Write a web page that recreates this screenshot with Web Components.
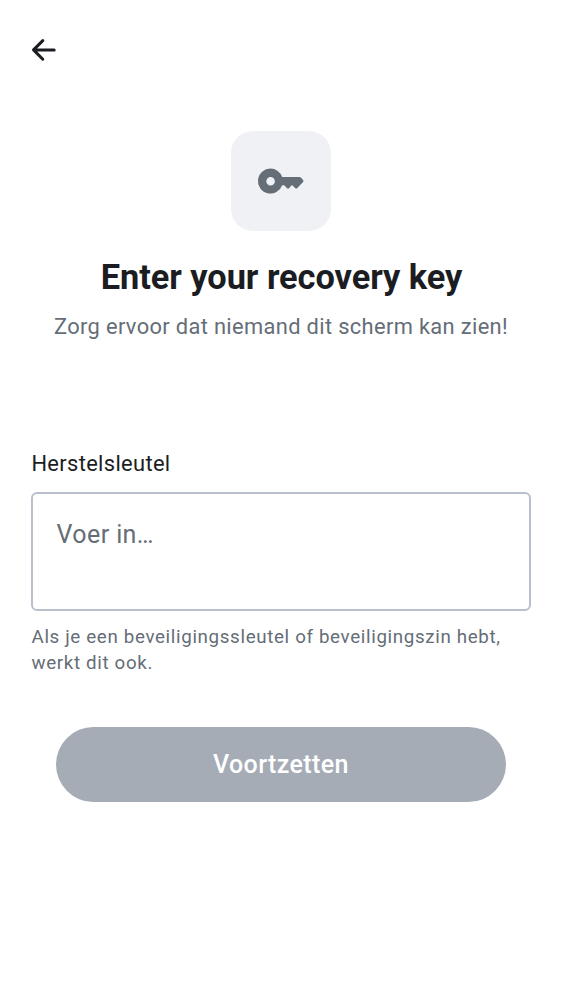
<!DOCTYPE html>
<html lang="nl"><head><meta charset="utf-8"><title>Recovery key</title>
<style>html,body{margin:0;height:100%;background:#fff}body{font-family:Roboto,sans-serif;color:#1b1d22}</style></head><body>
<recovery-screen></recovery-screen>
<script>
const define=(name,html)=>customElements.define(name,class extends HTMLElement{constructor(){super();this.attachShadow({mode:'open'}).innerHTML=html}});
define('back-button',`<style>:host{display:block;width:26px;height:24px}svg{display:block}</style>
<svg width="26" height="24" viewBox="0 0 26 24" fill="none" stroke="#1b1d22" stroke-width="3" stroke-linecap="round" stroke-linejoin="round"><path d="M11.8 2.6 2.5 11.9l9.3 9.3M3 11.9h20.2"/></svg>`);
define('key-tile',`<style>:host{display:flex;align-items:center;justify-content:center;width:100px;height:100px;border-radius:22px;background:#f0f1f5}svg{display:block}</style>
<svg width="50" height="50" viewBox="0 0 50 50" fill="#656d77"><path fill-rule="evenodd" d="M14.5 12.6a12.5 12.5 0 0 1 11.7 8.3h17.3q.8 0 1.4.6l2.2 2.6q.7 1 0 1.9l-6 6.2q-.9.8-1.8 0L36.6 29.6q-.6-.6-1.2 0L33 32.2q-1 .9-1.9 0l-2.9-2.9h-2A12.5 12.5 0 1 1 14.5 12.6M14.6 20.9a4.3 4.3 0 1 0 0 8.6 4.3 4.3 0 0 0 0-8.6"/></svg>`);
define('page-heading',`<style>:host{display:flex;flex-direction:column;align-items:center}h1{margin:25px 0 0;padding-left:1px;font-size:34.375px;line-height:42px;font-weight:700;letter-spacing:-.05px;white-space:nowrap}p{margin:16px 0 0;font-size:21.875px;line-height:26px;color:#656d77;letter-spacing:.345px;white-space:nowrap}</style>
<key-tile></key-tile><h1><slot name="title"></slot></h1><p><slot></slot></p>`);
define('key-field',`<style>:host{display:block}label{display:block;font-size:21.875px;line-height:28px;letter-spacing:.35px;padding-left:.4px}.box{box-sizing:border-box;height:119px;margin-top:14px;padding:26px 23.6px;border:2px solid #b9c0cc;border-radius:6px;color:#656d77;font-size:25px;line-height:30px;letter-spacing:.4px}.hint{margin-top:13px;padding-left:.5px;color:#656d77;font-size:18.75px;line-height:26px;letter-spacing:.65px}</style>
<label><slot name="label"></slot></label><div class="box"><slot name="placeholder"></slot></div><div class="hint"><slot></slot></div>`);
define('primary-button',`<style>:host{display:flex;align-items:center;justify-content:center;height:75px;border-radius:38px;background:#a5acb6;color:#fff;font-size:25px;font-weight:500;letter-spacing:.4px}</style><slot></slot>`);
define('recovery-screen',`<style>:host{display:flex;flex-direction:column;box-sizing:border-box;width:562px;height:1000px;padding:38px 31px}page-heading{margin-top:69px}key-field{margin-top:110px}primary-button{margin:50.6px 25px 0}</style>
<back-button></back-button><page-heading><span slot="title">Enter your recovery key</span>Zorg ervoor dat niemand dit scherm kan zien!</page-heading>
<key-field><span slot="label">Herstelsleutel</span><span slot="placeholder">Voer in…</span>Als je een beveiligingssleutel of beveiligingszin hebt,<br>werkt dit ook.</key-field><primary-button>Voortzetten</primary-button>`);
</script></body></html>
